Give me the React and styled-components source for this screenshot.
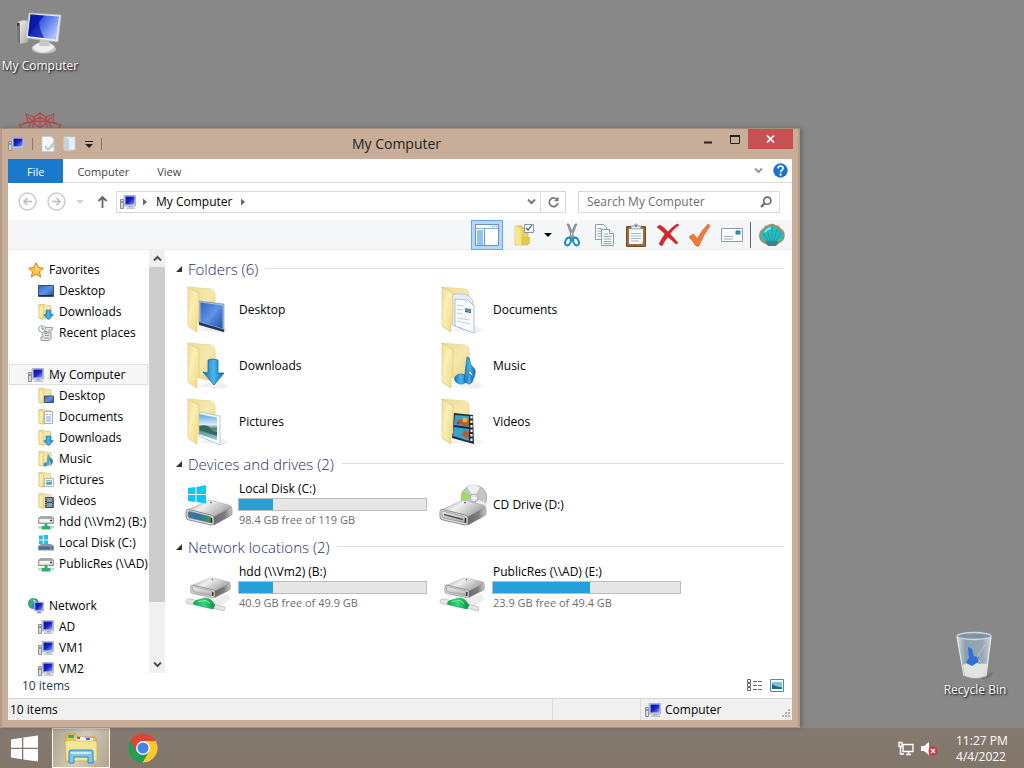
import styled, { createGlobalStyle } from "styled-components";

const colors = {
    desktop: "#888888",
    frame: "#c8ae98",
    frameEdge: "#a08d7e",
    blue: "#1979ca",
    bar: "#26a0da",
    line: "#dcdcdc",
    text: "#000000",
    grey: "#6d6d6d",
};

const GlobalStyle = createGlobalStyle`
* { box-sizing: border-box; }
body {
margin: 0;
font-family: "Open Sans", "Noto Sans", sans-serif;
font-size: 12px;
line-height: 16px;
color: ${colors.text};
}
button, input { font: inherit; color: inherit; }
svg { display: block; flex: none; }
`

const Screen = styled.div`
display: flex;
flex-direction: column;
height: 100vh;
overflow: hidden;
background: ${colors.desktop};
`
const Desktop = styled.main`
position: relative;
flex: 1;
min-height: 0;
`
const PlainButton = styled.button`
display: flex;
align-items: center;
justify-content: center;
padding: 0;
border: 0;
background: none;
`
const Shortcut = styled(PlainButton)`
position: absolute;
left: ${p => p.$left};
right: ${p => p.$right};
top: ${p => p.$top};
bottom: ${p => p.$bottom};
width: 80px;
flex-direction: column;
gap: 2px;
color: #fff;
text-shadow: 1px 1px 2px #000;
white-space: nowrap;
`

/* window */
const Window = styled.section`
position: absolute;
left: 0;
right: 224px;
top: 128px;
bottom: 0;
display: flex;
flex-direction: column;
padding: 0 8px 8px;
background: ${colors.frame};
border-top: 1px solid ${colors.frameEdge};
box-shadow: inset 2px 0 0 #b39b88, inset -2px 0 0 #b39b88, inset 0 -1px 0 #a58f7e, 2px 0 4px #666;
`
const TitleBar = styled.header`
display: grid;
grid-template-columns: 1fr auto 1fr;
height: 30px;
margin: 0 -1px 0 -8px;
`
const QuickAccess = styled.div`
display: flex;
align-items: center;
gap: 8px;
padding-left: 8px;
`
const Title = styled.h1`
margin: 0;
font-size: 14px;
line-height: 30px;
font-weight: 400;
color: #222;
`
const Controls = styled.div`
display: flex;
justify-content: flex-end;
`
const Control = styled(PlainButton)`
width: ${p => (p.$close ? 45 : 27)}px;
height: 20px;
background: ${p => (p.$close ? "#c75050" : "none")};
`
const Divider = styled.span`
width: 1px;
height: ${p => p.$height}px;
background: ${p => p.$color};
`
const Client = styled.div`
display: flex;
flex-direction: column;
flex: 1;
min-height: 0;
background: #fff;
`
const Ribbon = styled.div`
display: flex;
height: 24px;
flex: none;
border-bottom: 1px solid ${colors.line};
`
const Tab = styled(PlainButton)`
padding: 2px ${p => (p.$file ? 19 : 14)}px 0;
height: ${p => (p.$file ? 24 : 23)}px;
font-size: 11px;
background: ${p => (p.$file ? colors.blue : "none")};
color: ${p => (p.$file ? "#fff" : "#444")};
`
const RibbonEnd = styled.div`
display: flex;
align-items: center;
gap: 10px;
margin-left: auto;
padding-right: 4px;
`
const AddressRow = styled.div`
display: flex;
align-items: center;
height: 37px;
flex: none;
padding: 0 12px 0 10px;
`
const NavButtons = styled.div`
display: flex;
align-items: center;
gap: 10px;
padding-right: 6px;
`
const AddressBox = styled.div`
display: flex;
align-items: center;
flex: 1;
height: 22px;
border: 1px solid #d9d9d9;
`
const Crumb = styled(PlainButton)`
padding: 0 7px;
`
const RootCrumb = styled(Crumb)`
padding: 0 5px 0 3px;
`
const Refresh = styled(PlainButton)`
width: 25px;
height: 20px;
margin-left: 4px;
border-left: 1px solid #d9d9d9;
`
const SearchBox = styled.label`
display: flex;
align-items: center;
width: 202px;
height: 22px;
margin-left: 12px;
padding: 0 7px 0 8px;
border: 1px solid #d9d9d9;
`
const SearchInput = styled.input`
flex: 1;
min-width: 0;
padding: 0;
border: 0;
outline: 0;
background: none;
&::placeholder { color: #6d6d6d; opacity: 1; }
`
const CommandBar = styled.div`
display: flex;
justify-content: flex-end;
align-items: center;
height: 30px;
flex: none;
padding-right: 4px;
background: #f5f6f7;
border-bottom: 1px solid #eceded;
`
const Command = styled(PlainButton)`
width: ${p => (p.$narrow ? 16 : 32)}px;
height: 30px;
border: ${p => (p.$active ? "1px solid #66a7e8" : "0")};
background: ${p => (p.$active ? "#b9d5f5" : "none")};
margin-right: ${p => (p.$active ? 5 : 0)}px;
`
const CommandDivider = styled(Divider)`
margin: 0 5px 0 2px;
`
const Body = styled.div`
display: flex;
flex: 1;
min-height: 0;
`
const Sidebar = styled.nav`
flex: none;
width: 141px;
overflow: hidden;
padding-top: 9px;
`
const SideList = styled.ul`
margin: 0 0 21px;
padding: 0;
list-style: none;
`
const SideLink = styled.a`
display: flex;
align-items: center;
gap: 5px;
height: 21px;
margin: 0 1px;
padding-left: ${p => (p.$root ? 18 : 28)}px;
border: 1px solid ${p => (p.$selected ? "#dedede" : "transparent")};
background: ${p => (p.$selected ? "#f7f7f7" : "none")};
color: inherit;
text-decoration: none;
white-space: nowrap;
`
const ScrollTrack = styled.div`
display: flex;
flex-direction: column;
width: 16px;
margin-bottom: 4px;
background: #f0f0f0;
`
const ScrollButton = styled(PlainButton)`
height: 17px;
flex: none;
`
const ScrollThumb = styled.div`
height: 86%;
background: #cdcdcd;
`
const ScrollRest = styled.div`
flex: 1;
`
const Content = styled.div`
flex: 1;
min-width: 0;
padding: 5px 8px 0 10px;
overflow: hidden;
`
const GroupHeader = styled.h2`
display: flex;
align-items: center;
gap: 5px;
height: 27px;
margin: 0;
font-size: 15px;
font-weight: 300;
color: #1e2d6c;
&::after {
content: "";
flex: 1;
height: 1px;
margin-left: 2px;
background: #e2e2e2;
}
`
const Tiles = styled.div`
display: grid;
grid-template-columns: repeat(auto-fill, 254px);
padding-left: 10px;
`
const Tile = styled.a`
display: flex;
align-items: center;
gap: 5px;
height: 56px;
color: inherit;
text-decoration: none;
`
const TileText = styled.div`
width: 189px;
padding-bottom: ${p => (p.$drive ? 2 : 0)}px;
`
const TileLine = styled.div`
padding-left: 1px;
font-size: ${p => (p.$muted ? 11 : 12)}px;
color: ${p => (p.$muted ? colors.grey : colors.text)};
`
const Meter = styled.div`
height: 13px;
margin: 1px 0;
border: 1px solid #bcbcbc;
background: #e6e6e6;
`
const MeterFill = styled.div`
height: 100%;
background: ${colors.bar};
`
const DetailsRow = styled.div`
display: flex;
align-items: center;
gap: 8px;
height: 21px;
flex: none;
padding: 0 8px 4px 14px;
color: #1e395b;
`
const Grow = styled.span`
flex: 1;
`
const StatusBar = styled.footer`
display: grid;
grid-template-columns: 1fr 88px 152px;
height: 22px;
flex: none;
background: #f0f0f0;
border-top: 1px solid #d7d7d7;
`
const StatusCell = styled.div`
display: flex;
align-items: center;
gap: 4px;
padding-left: ${p => (p.$first ? 2 : 4)}px;
border-left: ${p => (p.$first ? "0" : "1px solid #dadada")};
`

/* taskbar */
const Taskbar = styled.footer`
display: flex;
align-items: center;
height: 40px;
flex: none;
background: linear-gradient(#857a70, #82766b);
color: #fff;
`
const StartButton = styled(PlainButton)`
width: 48px;
height: 40px;
`
const TaskButton = styled(PlainButton)`
width: 58px;
height: 40px;
margin-left: 4px;
border: ${p => (p.$active ? "1px solid #fff6e8" : "0")};
background: ${p => (p.$active ? "linear-gradient(110deg, #aba392, #d6ccb8 50%, #aea590)" : "none")};
`
const Tray = styled.div`
display: flex;
align-items: center;
gap: 7px;
margin-left: auto;
padding-right: 18px;
`
const Clock = styled.time`
width: 50px;
margin-left: 11px;
padding-top: 2px;
font-size: 12px;
text-align: center;
white-space: nowrap;
`

/* shared gradients, referenced by id from every icon */
const GradientSheet = styled.svg`
position: absolute;
`

function Gradients() {
    return (
        <GradientSheet width="0" height="0" aria-hidden="true">
            <defs>
                <linearGradient id="screen" x1="0" y1="0" x2="1" y2=".6">
                    <stop offset="0" stopColor="#0c1a9c" /><stop offset=".38" stopColor="#0a1fc4" />
                    <stop offset=".42" stopColor="#3c5ce4" /><stop offset="1" stopColor="#a8c2fb" />
                </linearGradient>
                <linearGradient id="smallScreen" x1="0" y1="0" x2="1" y2="1">
                    <stop offset="0" stopColor="#0b109a" /><stop offset=".5" stopColor="#1a22c8" /><stop offset="1" stopColor="#8fa2f4" />
                </linearGradient>
                <linearGradient id="silver" x1="0" y1="0" x2="1" y2="1">
                    <stop offset="0" stopColor="#f6f6f4" /><stop offset="1" stopColor="#a9a9a7" />
                </linearGradient>
                <linearGradient id="flap" x1="0" y1="0" x2="1" y2="1">
                    <stop offset="0" stopColor="#f0dd90" /><stop offset=".4" stopColor="#fbefb8" /><stop offset="1" stopColor="#f0d877" />
                </linearGradient>
                <linearGradient id="back" x1="0" y1="0" x2="1" y2="1">
                    <stop offset="0" stopColor="#eedb93" /><stop offset=".5" stopColor="#f6e8ae" /><stop offset="1" stopColor="#e2c979" />
                </linearGradient>
                <linearGradient id="arrow" x1="0" y1="0" x2="1" y2="0">
                    <stop offset="0" stopColor="#1779bd" /><stop offset=".5" stopColor="#48b6ec" /><stop offset="1" stopColor="#0d6cb2" />
                </linearGradient>
                <linearGradient id="deskBlue" x1="0" y1="0" x2="1" y2="1">
                    <stop offset="0" stopColor="#3767be" /><stop offset=".5" stopColor="#5d93ea" /><stop offset="1" stopColor="#2450a2" />
                </linearGradient>
                <linearGradient id="photo" x1="0" y1="0" x2="0" y2="1">
                    <stop offset="0" stopColor="#5aa5e3" /><stop offset=".4" stopColor="#d8edf5" />
                    <stop offset=".55" stopColor="#4d8179" /><stop offset="1" stopColor="#9cd0e8" />
                </linearGradient>
                <linearGradient id="driveTop" x1="0" y1="0" x2="1" y2=".5">
                    <stop offset="0" stopColor="#9a9a9a" /><stop offset=".45" stopColor="#efefef" /><stop offset="1" stopColor="#a4a4a4" />
                </linearGradient>
                <linearGradient id="driveSide" x1="0" y1="0" x2="1" y2="0">
                    <stop offset="0" stopColor="#6a6a6a" /><stop offset=".6" stopColor="#7c7c7c" /><stop offset="1" stopColor="#c9c9c9" />
                </linearGradient>
                <linearGradient id="cFront" x1="0" y1="0" x2="1" y2="0">
                    <stop offset="0" stopColor="#56718f" /><stop offset=".5" stopColor="#1d7ab5" /><stop offset="1" stopColor="#4b9a42" />
                </linearGradient>
                <linearGradient id="plainFront" x1="0" y1="0" x2="0" y2="1">
                    <stop offset="0" stopColor="#f2f2f2" /><stop offset="1" stopColor="#a8a8a8" />
                </linearGradient>
                <linearGradient id="cable" x1="0" y1="0" x2="1" y2="0">
                    <stop offset="0" stopColor="#12aa4f" /><stop offset=".5" stopColor="#2fd87b" /><stop offset="1" stopColor="#0c8f3d" />
                </linearGradient>
                <linearGradient id="bin" x1="0" y1="0" x2="1" y2="0">
                    <stop offset="0" stopColor="#e8f1f6" /><stop offset=".25" stopColor="#8fa8bb" />
                    <stop offset=".75" stopColor="#9db1bf" /><stop offset="1" stopColor="#e4ebef" />
                </linearGradient>
            </defs>
        </GradientSheet>
    )
}

function ComputerLarge() {
    return (
        <svg width="48" height="44" viewBox="0 0 48 44">
            <path d="M1 10 8 8l4 1v21l-8 2-3-2z" fill="url(#silver)" stroke="#a5a5a3" strokeWidth=".6" />
            <path d="M1 10l3 1v21l-3-2z" fill="#77776f" />
            <path d="M2 11v3" stroke="#222" strokeWidth="1.4" />
            <ellipse cx="28" cy="37" rx="12" ry="4.5" fill="#c4c4c2" />
            <path d="M16 35q5-5 12-5t11 5q-5 6-12 6t-11-6z" fill="#eeeeec" stroke="#aaa" strokeWidth=".5" />
            <path d="M24 27h9l1 7h-11z" fill="#c8c8c6" />
            <path d="M13 1 45 3 42 30 10 26z" fill="#e6e9ef" stroke="#b2b7c0" strokeWidth=".7" />
            <path d="M14.500 2.500 43 4.500 40 27.500 12 24z" fill="url(#screen)" />
            <path d="M14.500 2.500 23 3q-1 12 5 23L12 24z" fill="#0718a0" opacity=".7" />
        </svg>
    )
}

function ComputerSmall() {
    return (
        <svg width="16" height="16" viewBox="0 0 16 16">
            <path d="M.5 5.500h3v9h-3z" fill="#d9dcd8" stroke="#8b8f8c" />
            <path d="M2 7v2" stroke="#555" />
            <path d="M8.500 11h4v2.500h-4z" fill="#a5b0c4" />
            <path d="M6 13.500h9v1.300H6z" fill="#b4b9c3" />
            <path d="M4 1.500h11.500v10.500H4z" fill="#cfd6e6" stroke="#a2abc0" strokeWidth=".8" />
            <path d="M5.500 2.500h9v8h-9z" fill="url(#smallScreen)" />
        </svg>
    )
}

/* what leans out of a big folder, by kind */
const inserts = {
    desktop: (
        <g>
            <path d="M12 15 37 18v28L12 38z" fill="#a8bcd8" stroke="#7488a5" strokeWidth=".6" />
            <path d="M13.500 16.500 35.500 19.500v23L13.500 36z" fill="url(#deskBlue)" />
            <path d="M12 36 37 43.500V46L12 39z" fill="#243a50" />
        </g>
    ),
    downloads: <path d="M21 18q5-2 10 0v13h6L27 43 16 30l5 1z" fill="url(#arrow)" stroke="#0b5d9b" strokeWidth=".7" />,
    pictures: (
        <g>
            <path d="M12 14 33 18v29L12 38z" fill="#fbfdfe" stroke="#a3b3bc" strokeWidth=".7" />
            <path d="M12 16 30 19.500v23L12 36z" fill="url(#photo)" />
            <path d="M12 28q8-2 11 2t7 4v4L12 32z" fill="#36665f" />
        </g>
    ),
    documents: (
        <g>
            <path d="M11 9q10-3 17 1l4 5v31L11 39z" fill="#e9eef8" stroke="#a9b5cc" strokeWidth=".7" />
            <path d="M14 13 27 14l6 6v27L14 40z" fill="#f9fbff" stroke="#98a8c7" strokeWidth=".7" />
            <path d="M16 19 23 20M16 23 22 24M16 27 22 28M16 32 29 34M16 35 29 38" stroke="#c2cce0" />
            <path d="M24 22l6 1v3l-6-1z" fill="#5b8cc0" /><path d="M24 25l6 1v1l-6-1z" fill="#444" />
        </g>
    ),
    music: (
        <g fill="url(#arrow)" stroke="#1768a8" strokeWidth=".6">
            <ellipse cx="20" cy="37" rx="6.500" ry="5" /><ellipse cx="28" cy="37" rx="4" ry="5" />
            <path d="M26 15q3 0 3 4t4 7q3 5-1 11 0-7-4-9l-2 12h-3z" />
        </g>
    ),
    videos: (
        <g>
            <path d="M13 15 32 17 33 46 11 40z" fill="#242a2d" />
            <path d="M14 17 28 18v11L13 27zM13 29 28 31v12L12 38z" fill="#3aa2d2" />
            <path d="M16 25q1-6 5-3l4-3 3 3v7l-6-2zM20 37l4-5 4 2v7z" fill="#b5602c" />
            <circle cx="24" cy="22" r="2.500" fill="#e2b13b" /><circle cx="17" cy="25" r="1.500" fill="#a93556" />
            <path d="M30.500 18v27" stroke="#f3f3f3" strokeWidth="2.200" strokeDasharray="2.500 2" />
        </g>
    ),
}

function FolderLarge({ kind }) {
    return (
        <svg width="48" height="48" viewBox="-2 0 48 48">
            <path d="M10 44 36 47l6-3-12-6z" fill="#000" opacity=".06" />
            <path d="M1 1 25 3q2 1 3 4l1 33-17-4z" fill="url(#back)" stroke="#e3d195" strokeWidth=".6" />
            {inserts[kind]}
            <path d="M1 1 11 7q1 1 1 3v25l-2 1.500V46l-8-5q-1-1-1-2z" fill="url(#flap)" stroke="#d9c37a" strokeWidth=".6" />
        </svg>
    )
}

const smallInserts = {
    desktop: <path d="M6.500 8h9v6.500h-9z" fill="url(#deskBlue)" stroke="#44546c" />,
    downloads: <path d="M8 6h5v4.500h2.500L10.500 16 5.500 10.500H8z" fill="url(#arrow)" stroke="#1b6fae" strokeWidth=".5" />,
    documents: (
        <g>
            <path d="M6.500 2.500h8v12h-8z" fill="#f7faff" stroke="#8fa0b8" strokeWidth=".8" />
            <path d="M8 5.500h2M11 5.500h2M8 8h5M8 10h5M8 12h5" stroke="#7d9cc8" strokeWidth=".9" />
        </g>
    ),
    music: <path d="M10 3q1 4 4 5 2 3-1 6 0-4-2-5v4q-4 4-6 1 1-3 4-2z" fill="url(#arrow)" stroke="#2a7d9c" strokeWidth=".4" />,
    pictures: (
        <g>
            <path d="M6.500 6.500h9v8h-9z" fill="#fff" stroke="#9aa9b4" strokeWidth=".8" />
            <path d="M8 8h6v5H8z" fill="url(#photo)" />
        </g>
    ),
    videos: (
        <g>
            <path d="M7 4h9v11H7z" fill="#3b4248" /><path d="M9 5h5v4H9zM9 10h5v4H9z" fill="#7ea1b5" />
            <path d="M8 4.500V15M15 4.500V15" stroke="#ddd" strokeDasharray="1 1.200" />
        </g>
    ),
}

function FolderSmall({ kind }) {
    return (
        <svg width="16" height="16" viewBox="0 0 16 16">
            <path d="M1 .5h6l1 1h4q1 0 1 1v12H1z" fill="url(#back)" stroke="#d8c06a" strokeWidth=".6" />
            {smallInserts[kind]}
            <path d="M1 .5 5.500 3v12.500L1 14z" fill="url(#flap)" stroke="#d5bb5c" strokeWidth=".5" />
        </svg>
    )
}

function WindowsLogo({ size, fill }) {
    return (
        <svg width={size} height={size} viewBox="0 0 27 26">
            <path d="M0 4 11 2.300V12.300H0zM12.300 2.100 27 0v12.300H12.300zM0 13.500h11v10.200L0 22zM12.300 13.500H27V26l-14.700-2.100z" fill={fill} />
        </svg>
    )
}

function DriveBody({ front }) {
    return (
        <g>
            <path d="M28 23 46 14q1 1 1 3v4q0 1-2 2L29 32z" fill="url(#driveSide)" stroke="#7d7d7d" strokeWidth=".6" />
            <path d="M2 17 21 8.500q3-1.500 6-1l17 4.500q4 1 1 3L30 23q-2 1-4 .5z" fill="url(#driveTop)" stroke="#9b9b9b" strokeWidth=".4" />
            <path d="M1 18.500q0-2.500 3-2L26 22q3 .5 3 3v4.500q0 3-3 2.500L4 27q-3-.5-3-3z" fill="#dedede" stroke="#777" strokeWidth=".8" />
            <path d="M3 19.500q0-1.500 2-1L25 23.500q1.500.5 1.500 2v2.500q0 2-2 1.500L5 25q-2-.5-2-2z" fill={front} stroke="#777" strokeWidth=".6" />
            <path d="M26.500 25v5" stroke="#1b301b" strokeWidth="1.600" />
            <circle cx="26" cy="9.500" r="1" fill="#777" />
        </g>
    )
}

function DriveIcon({ kind }) {
    if (kind === "network") {
        return (
            <svg width="48" height="48" viewBox="0 0 48 48">
                <path d="M20 38 42 30l4 5-14 9z" fill="#000" opacity=".07" />
                <g transform="translate(5 8) scale(.86 .8)"><DriveBody front="url(#plainFront)" /></g>
                <path d="M1 37q1-3 4-2l9 2-1 4-10-1q-3-1-2-3zM28 40l12 3-1 4-12-3z" fill="#e2e7e3" stroke="#a8b0aa" strokeWidth=".6" />
                <path d="M11 36.500l9-2.500q4 0 6 2l4 5-2 4-9-2-10-2.500q-2-2 2-4z" fill="url(#cable)" stroke="#17854a" strokeWidth=".5" />
                <path d="M13 37.500l8-1 4 3" stroke="#7df0ac" fill="none" />
            </svg>
        )
    }
    return (
        <svg width="48" height="48" viewBox="0 0 48 48">
            {kind === "cd" && (
                <g>
                    <circle cx="35" cy="17" r="13" fill="#c3c5c4" stroke="#a3a3a3" strokeWidth=".7" />
                    <path d="M35 17 24 10q-3 5-1 9z" fill="#9bdc61" />
                    <path d="M35 17 28 6q7-4 13 0zM35 17l12 5q-2 5-7 7z" fill="#efefef" />
                    <circle cx="35" cy="17" r="4" fill="#e3e3e3" stroke="#9d9d9d" strokeWidth=".7" />
                    <circle cx="35" cy="17" r="1.500" fill="#fff" />
                </g>
            )}
            <g transform="translate(0 12)">
                <DriveBody front={kind === "system" ? "url(#cFront)" : "url(#plainFront)"} />
                {kind === "cd" && <path d="M5 21.500 24 26.500" stroke="#555" strokeWidth="1.600" />}
            </g>
            {kind === "system" && <path d="M3 7 10.500 6v7H3zM11.500 6 21 4v9h-9.500zM3 14h7.500v7L3 20zM11.500 14H21v8.500l-9.500-1.400z" fill="#12c5f0" />}
        </svg>
    )
}

function DriveSmall({ system }) {
    return (
        <svg width="16" height="16" viewBox="0 0 16 16">
            {system ? (
                <g>
                    <path d="M1 .5h3.800v4H1zM5.800 0H10v4.500H5.800zM1 5.500h3.800V9H1zM5.800 5.500H10V9H5.800z" fill="#21bfe8" />
                    <path d="M0 11 3 9h10l3 2v4.500H0z" fill="#8b9aa6" /><path d="M1 11.500h14v3H1z" fill="#3f6f94" /><path d="M12 13h2" stroke="#8de26f" />
                </g>
            ) : (
                <g>
                    <path d="M0 4 2.500 2h11L16 4v6H0z" fill="#a9a9a9" /><path d="M.8 4.300h14.400V9H.8z" fill="#f3f3f3" stroke="#888" strokeWidth=".7" />
                    <path d="M12 6.500h2" stroke="#333" strokeWidth="1.500" /><path d="M6.500 9.500h3v2.500h3v3.500h-9V12h3z" fill="#2fae72" />
                    <path d="M0 12h3.500v2.500H0zM12.500 12H16v2.500h-3.500z" fill="#b9dcc8" />
                </g>
            )}
        </svg>
    )
}

function StarIcon() {
    return (
        <svg width="16" height="16" viewBox="0 0 16 16">
            <path d="M8 .8 10.200 5.600 15.500 6.200 11.500 9.700 12.700 15 8 12.300 3.300 15 4.500 9.700.5 6.200 5.800 5.600z" fill="#fdc64a" stroke="#df7c1c" />
            <path d="M8 3.500 9.400 7 12 7.400 8 8z" fill="#fff1b6" />
        </svg>
    )
}

function DesktopSmall() {
    return (
        <svg width="16" height="16" viewBox="0 0 16 16">
            <path d="M.5 2.500h15v11H.5z" fill="url(#deskBlue)" stroke="#3d4d6a" /><path d="M1 12.500h14" stroke="#1d2d46" />
        </svg>
    )
}

function RecentIcon() {
    return (
        <svg width="16" height="16" viewBox="0 0 16 16">
            <path d="M4 2.500h10.500v2H13V14q-1 1.500-3 1.500H3V12h2z" fill="#e4e7e9" stroke="#8d9499" strokeWidth=".9" />
            <path d="M7 6.500h2v2H7zM10 6h2M10 8h2M7 10.500h4M6 13h5" stroke="#7f8a92" fill="none" strokeWidth=".9" />
            <circle cx="4" cy="4" r="3.400" fill="#f4f6f8" stroke="#9aa3a9" /><path d="M4 2v2h2" stroke="#7b868e" fill="none" />
        </svg>
    )
}

function NetworkIcon() {
    return (
        <svg width="16" height="16" viewBox="0 0 16 16">
            <circle cx="5.500" cy="5.500" r="5.500" fill="#2f86cc" /><path d="M2 2q4-3 6 0T5 5q-2 3 0 5Q0 9 1 5z" fill="#3fae63" /><path d="M5 1l3 2-2 1z" fill="#d9f0ff" />
            <path d="M6.500 4h9v9h-9z" fill="#cfd6e6" stroke="#98a3be" strokeWidth=".6" /><path d="M7.300 4.800h7.400v7.400H7.300z" fill="url(#smallScreen)" />
            <path d="M9.500 13h3l1 2.500h-5z" fill="#93a3c0" />
        </svg>
    )
}

function Chevron({ up, color = "#777" }) {
    return (
        <svg width="9" height="7" viewBox="0 0 9 7">
            <path d={up ? "M1 5.500 4.500 2 8 5.500" : "M1 1.500 4.500 5 8 1.500"} fill="none" stroke={color} strokeWidth="2" />
        </svg>
    )
}

function Caret({ right, color = "#666" }) {
    return (
        <svg width="8" height="8" viewBox="0 0 8 8">
            <path d={right ? "M2 0.500 6 4 2 7.500z" : "M0 2h8L4 6z"} fill={color} />
        </svg>
    )
}

function RoundArrow({ forward }) {
    return (
        <svg width="19" height="19" viewBox="0 0 19 19">
            <circle cx="9.500" cy="9.500" r="8.500" fill="#fff" stroke="#c9c9c9" strokeWidth="1.400" />
            <path d={forward ? "M5 9.500h8M9.500 6 13 9.500 9.500 13" : "M14 9.500H6M9.500 6 6 9.500 9.500 13"} fill="none" stroke="#bdbdbd" strokeWidth="1.600" />
        </svg>
    )
}

const commands = [
    {
        name: "Cut",
        icon: (
            <svg width="24" height="24" viewBox="0 0 24 24">
                <path d="M7 1 9 1 14.500 15 12.500 16zM17 1h-2L9 15l2 1z" fill="#8d9aa3" stroke="#6d7a83" strokeWidth=".5" />
                <ellipse cx="8" cy="18.500" rx="2.600" ry="4" transform="rotate(25 8 18.500)" fill="none" stroke="#1b8cc4" strokeWidth="2" />
                <ellipse cx="16" cy="18.500" rx="2.600" ry="4" transform="rotate(-25 16 18.500)" fill="none" stroke="#1b8cc4" strokeWidth="2" />
            </svg>
        ),
    },
    {
        name: "Copy",
        icon: (
            <svg width="24" height="24" viewBox="0 0 24 24" fill="#fff" stroke="#8d9ba5">
                <path d="M3.500 1.500h8l3 3v12h-11z" /><path d="M5 5.500h5M5 8h5M5 10.500h5M5 13h5" stroke="#8db3cf" />
                <path d="M9.500 6.500h8l4 4v12h-12z" /><path d="M17.500 6.500v4h4" /><path d="M11.500 11h5M11.500 13.500h8M11.500 16h8M11.500 18.500h8M11.500 20.500h8" stroke="#7faac9" />
            </svg>
        ),
    },
    {
        name: "Paste",
        icon: (
            <svg width="24" height="24" viewBox="0 0 24 24">
                <path d="M2.500 3.500h19v20h-19z" fill="#9b6b36" stroke="#74491e" /><path d="M5 6h14v15H5z" fill="#fbfdff" />
                <path d="M7 10.500h10M7 13h10M7 15.500h10M7 18h8" stroke="#9cb4c5" />
                <path d="M16 21l3-3v3z" fill="#c4d0d8" /><path d="M7 6V3h3q0-2 2-2t2 2h3v3z" fill="#e6e9eb" stroke="#7c8489" strokeWidth=".7" /><circle cx="12" cy="3" r="1" fill="#555" />
            </svg>
        ),
    },
    {
        name: "Delete",
        icon: (
            <svg width="24" height="24" viewBox="0 0 24 24">
                <path d="M1 4 4 2q5 3 8 7 4-5 9-8l2 1q-7 5-9 9 4 4 8 9l-2 1q-4-4-8-7-4 4-6 9l-3-2q3-6 6-10-4-4-8-7z" fill="#d8262b" stroke="#ab1419" strokeWidth=".5" />
            </svg>
        ),
    },
    {
        name: "Rename",
        icon: (
            <svg width="24" height="24" viewBox="0 0 24 24">
                <path d="M1 14 5 11q3 2 4 5Q14 7 20 1l2 2q-7 9-11 20H8Q5 18 1 14z" fill="#f07a3c" stroke="#cf551a" strokeWidth=".6" />
            </svg>
        ),
    },
    {
        name: "Properties",
        icon: (
            <svg width="24" height="24" viewBox="0 0 24 24">
                <path d="M1.500 5.500h21v13h-21z" fill="#fdfefe" stroke="#8d989f" /><path d="M4 13.500h9M4 16h9" stroke="#a0a9af" />
                <path d="M16 8h4v3h-4z" fill="#2b9cba" stroke="#1a7f9c" />
            </svg>
        ),
    },
]

function ShellIcon() {
    return (
        <svg width="26" height="24" viewBox="0 0 26 24">
            <path d="M4 19Q0 16 1 11q1-4 4-5 1-3 4-3 4-3 8 0 3 0 4 3 4 2 4 6 0 5-4 7l-3 2H8z" fill="#2bbcc2" stroke="#c3804f" strokeWidth="1.400" />
            <path d="M10 19 4 10M11.500 19 8 6M13 19V4M14.500 19 18 6M16 19l6-9" stroke="#1b9aa8" strokeWidth="1" />
            <path d="M6 9q3-4 6-4" stroke="#7fe8e2" strokeWidth="2" fill="none" /><path d="M7 18.500h12l-2 4H9z" fill="#2d8a80" stroke="#8a6a46" />
        </svg>
    )
}

function RecycleBin() {
    return (
        <svg width="42" height="50" viewBox="0 0 42 50">
            <path d="M26 48 39 42l-2 5-8 3z" fill="#555" opacity=".4" />
            <path d="M3 6h34l-5 41q-10 4-21 0z" fill="url(#bin)" opacity=".75" />
            <path d="M9 35q5-4 8-1 5-3 8 0 4-1 8 0l-2 12q-9 4-20 0z" fill="#e2e4e2" />
            <path d="M14 17l4 2 2 8-5 3zM19 26l6 1-1 5-6 4-6-3 2-4z" fill="#2f6fda" />
            <path d="M31 15 23 27l4 6" stroke="#dbe6ee" fill="none" opacity=".5" />
            <ellipse cx="20" cy="6" rx="17" ry="3.500" fill="#7c94a4" stroke="#cddae1" strokeWidth="1.300" />
            <path d="M3 7 10 46M37 7 32 46" stroke="#e5ecef" strokeWidth="1.200" />
        </svg>
    )
}

function GearIcon() {
    return (
        <svg width="46" height="46" viewBox="0 0 46 46" fill="none" stroke="#b8484a" strokeWidth="1.300">
            <path d="M9 2 17 5 23 1 29 5 37 2 36 10 44 13 38 20 43 27 35 31 34 39 23 43 12 39 10 31 3 27 8 20 2 13 11 10z" />
            <path d="M3 13q20-8 40 0M11 5l24 22M35 5 11 27M17 5l-2 20M29 5l2 20M23 1v30" /><circle cx="23" cy="17" r="11" />
        </svg>
    )
}

function ExplorerIcon() {
    return (
        <svg width="34" height="32" viewBox="0 0 34 32">
            <path d="M2 4q0-2 2-2h7l2 3h17q2 0 2 2v21H2z" fill="#e9c95a" stroke="#b58d2d" strokeWidth=".7" />
            <path d="M4 3h6v3H4z" fill="#4aaa53" /><path d="M12 5h8v4h-8z" fill="#fff" /><path d="M13 5h3v2h-3z" fill="#d43d35" /><path d="M20 6h9v4h-9z" fill="#f5faff" /><path d="M22 6h4v2h-4z" fill="#2e75c9" />
            <path d="M1 9q9-2 14 0h18v20H2z" fill="#f7e691" stroke="#cda945" strokeWidth=".7" />
            <path d="M5 20q0-2 2-2h20q2 0 2 2v11h-5v-6H10v6H5z" fill="#7fc5ee" stroke="#3186c4" /><path d="M7 20h20v2H7z" fill="#c6ecff" />
        </svg>
    )
}

function ChromeIcon() {
    return (
        <svg width="30" height="30" viewBox="0 0 30 30">
            <path d="M15 8h12.700A14.500 14.500 0 0 1 14.500 29.500L21 18z" fill="#fbc831" />
            <path d="M2.400 7.750A14.500 14.500 0 0 0 14.500 29.500L21 18.500 9 18.500z" fill="#239c54" />
            <path d="M2.400 7.750 9 19l6-11h12.600A14.500 14.500 0 0 0 2.400 7.750z" fill="#dd4436" />
            <circle cx="15" cy="15" r="7" fill="#f5f5f5" /><circle cx="15" cy="15" r="5.500" fill="#4285ee" />
        </svg>
    )
}

const sideGroups = [
    {
        name: "Favorites", icon: <StarIcon />,
        items: [
            { name: "Desktop", icon: <DesktopSmall /> },
            { name: "Downloads", icon: <FolderSmall kind="downloads" /> },
            { name: "Recent places", icon: <RecentIcon /> },
        ],
    },
    {
        name: "My Computer", icon: <ComputerSmall />, selected: true,
        items: [
            { name: "Desktop", icon: <FolderSmall kind="desktop" /> },
            { name: "Documents", icon: <FolderSmall kind="documents" /> },
            { name: "Downloads", icon: <FolderSmall kind="downloads" /> },
            { name: "Music", icon: <FolderSmall kind="music" /> },
            { name: "Pictures", icon: <FolderSmall kind="pictures" /> },
            { name: "Videos", icon: <FolderSmall kind="videos" /> },
            { name: "hdd (\\\\Vm2) (B:)", icon: <DriveSmall /> },
            { name: "Local Disk (C:)", icon: <DriveSmall system /> },
            { name: "PublicRes (\\\\AD)", icon: <DriveSmall /> },
        ],
    },
    {
        name: "Network", icon: <NetworkIcon />,
        items: [
            { name: "AD", icon: <ComputerSmall /> },
            { name: "VM1", icon: <ComputerSmall /> },
            { name: "VM2", icon: <ComputerSmall /> },
        ],
    },
]

const groups = [
    {
        name: "Folders (6)",
        tiles: ["Desktop", "Documents", "Downloads", "Music", "Pictures", "Videos"].map(name => ({
            name, icon: <FolderLarge kind={name.toLowerCase()} />,
        })),
    },
    {
        name: "Devices and drives (2)",
        tiles: [
            { name: "Local Disk (C:)", icon: <DriveIcon kind="system" />, used: 18, info: "98.4 GB free of 119 GB" },
            { name: "CD Drive (D:)", icon: <DriveIcon kind="cd" /> },
        ],
    },
    {
        name: "Network locations (2)",
        tiles: [
            { name: "hdd (\\\\Vm2) (B:)", icon: <DriveIcon kind="network" />, used: 18, info: "40.9 GB free of 49.9 GB" },
            { name: "PublicRes (\\\\AD) (E:)", icon: <DriveIcon kind="network" />, used: 52, info: "23.9 GB free of 49.4 GB" },
        ],
    },
]

function SideGroup({ group }) {
    return (
        <SideList>
            <li>
                <SideLink href="#" $root $selected={group.selected}>{group.icon}{group.name}</SideLink>
            </li>
            {group.items.map(item => (
                <li key={item.name}>
                    <SideLink href="#">{item.icon}{item.name}</SideLink>
                </li>
            ))}
        </SideList>
    )
}

function FileTile({ tile }) {
    return (
        <Tile href="#">
            {tile.icon}
            <TileText $drive={tile.info}>
                <TileLine>{tile.name}</TileLine>
                {tile.info && (
                    <>
                        <Meter><MeterFill style={{ width: `${tile.used}%` }} /></Meter>
                        <TileLine $muted>{tile.info}</TileLine>
                    </>
                )}
            </TileText>
        </Tile>
    )
}

function Explorer() {
    return (
        <Window>
            <TitleBar>
                <QuickAccess>
                    <ComputerSmall />
                    <Divider $height={12} $color="#8c7461" />
                    <PlainButton aria-label="Properties">
                        <svg width="14" height="16" viewBox="0 0 14 16">
                            <path d="M1 .5h9l3 3v12H1z" fill="#f4f9fb" stroke="#c6d0d5" strokeWidth=".8" /><path d="M4 9l3 3 6-7v5l-6 5-3-3z" fill="#b7cdd9" />
                        </svg>
                    </PlainButton>
                    <PlainButton aria-label="New folder">
                        <svg width="14" height="16" viewBox="0 0 14 16">
                            <path d="M1 1h11v13H1z" fill="#e8eef3" stroke="#cad5dd" strokeWidth=".8" /><path d="M1 1l5 2v12.500l-5-2z" fill="#c3d1df" />
                        </svg>
                    </PlainButton>
                    <PlainButton aria-label="Customize toolbar">
                        <svg width="8" height="8" viewBox="0 0 8 8"><path d="M0 1.500h8" stroke="#222" /><path d="M0 4h8L4 8z" fill="#222" /></svg>
                    </PlainButton>
                    <Divider $height={12} $color="#8c7461" />
                </QuickAccess>
                <Title>My Computer</Title>
                <Controls>
                    <Control aria-label="Minimize">
                        <svg width="10" height="10" viewBox="0 0 10 10"><path d="M1 8.500h8" stroke="#222" strokeWidth="2" /></svg>
                    </Control>
                    <Control aria-label="Maximize">
                        <svg width="10" height="9" viewBox="0 0 10 9"><path d="M.5 1h9v7.500h-9z" fill="none" stroke="#222" /><path d="M0 1h10" stroke="#222" strokeWidth="2" /></svg>
                    </Control>
                    <Control $close aria-label="Close">
                        <svg width="9" height="8" viewBox="0 0 9 8"><path d="M1 .5 8 7.500M8 .5 1 7.500" stroke="#fff" strokeWidth="1.700" /></svg>
                    </Control>
                </Controls>
            </TitleBar>
            <Client>
                <Ribbon>
                    <Tab $file>File</Tab>
                    <Tab>Computer</Tab>
                    <Tab>View</Tab>
                    <RibbonEnd>
                        <PlainButton aria-label="Expand ribbon"><Chevron color="#999" /></PlainButton>
                        <PlainButton aria-label="Help">
                            <svg width="15" height="15" viewBox="0 0 15 15">
                                <circle cx="7.500" cy="7.500" r="7.200" fill="#1874cd" />
                                <path d="M5 5.500q0-2.500 2.500-2.500T10 5.300q0 1.200-1.300 2Q7.600 8 7.600 9.400" fill="none" stroke="#fff" strokeWidth="1.700" /><circle cx="7.600" cy="11.700" r="1.100" fill="#fff" />
                            </svg>
                        </PlainButton>
                    </RibbonEnd>
                </Ribbon>
                <AddressRow>
                    <NavButtons>
                        <PlainButton aria-label="Back"><RoundArrow /></PlainButton>
                        <PlainButton aria-label="Forward"><RoundArrow forward /></PlainButton>
                        <PlainButton aria-label="Recent locations"><Caret color="#d4d4d4" /></PlainButton>
                        <PlainButton aria-label="Up">
                            <svg width="16" height="14" viewBox="0 0 16 14"><path d="M8.500 13V2.500M4.500 6 8.500 2l4 4" fill="none" stroke="#666" strokeWidth="1.800" /></svg>
                        </PlainButton>
                    </NavButtons>
                    <AddressBox>
                        <RootCrumb aria-label="Computer"><ComputerSmall /></RootCrumb>
                        <Caret right />
                        <Crumb>My Computer</Crumb>
                        <Caret right />
                        <Grow />
                        <PlainButton aria-label="Previous locations"><Chevron /></PlainButton>
                        <Refresh aria-label="Refresh">
                            <svg width="13" height="13" viewBox="0 0 13 13"><path d="M10.500 5.500A4.300 4.300 0 1 0 10.800 8" fill="none" stroke="#777" strokeWidth="1.700" /><path d="M11.500 1.500v4.800H7z" fill="#777" /></svg>
                        </Refresh>
                    </AddressBox>
                    <SearchBox>
                        <SearchInput type="text" placeholder="Search My Computer" aria-label="Search My Computer" />
                        <svg width="12" height="12" viewBox="0 0 12 12"><circle cx="7.300" cy="4.700" r="3.600" fill="none" stroke="#666" strokeWidth="1.600" /><path d="M4.700 7.300 1 11" stroke="#666" strokeWidth="2.200" /></svg>
                    </SearchBox>
                </AddressRow>
                <CommandBar>
                    <Command $active aria-label="Navigation pane">
                        <svg width="24" height="22" viewBox="0 0 24 22">
                            <path d="M.5.5h23v21H.5z" fill="#fff" stroke="#6891bd" /><path d="M1 4.500h22" stroke="#8fb0d2" /><path d="M2 6h6v15H2z" fill="#8fc3f1" /><path d="M9.500 5v16" stroke="#6891bd" />
                            <path d="M17 2.500h5" stroke="#6891bd" strokeDasharray="1 1" />
                        </svg>
                    </Command>
                    <Command aria-label="Folder options">
                        <svg width="24" height="24" viewBox="0 0 24 24">
                            <path d="M3 3h7l1 2h5v17H3z" fill="#e9d35f" stroke="#cdb75c" strokeWidth=".7" /><path d="M3 3l6 3v17.500L3 21z" fill="#f6e68b" />
                            <path d="M10 14h8v7h-8z" fill="#e0c94c" /><path d="M12.500 1.500h9v8h-9z" fill="#f6fbff" stroke="#8397a8" /><path d="M14 5l2 2 4-5" fill="none" stroke="#3a5a85" strokeWidth="1.200" />
                        </svg>
                    </Command>
                    <Command $narrow aria-label="More options"><Caret color="#000" /></Command>
                    {commands.map(command => (
                        <Command key={command.name} aria-label={command.name}>{command.icon}</Command>
                    ))}
                    <CommandDivider $height={26} $color="#666" />
                    <Command aria-label="Shell options"><ShellIcon /></Command>
                </CommandBar>
                <Body>
                    <Sidebar>
                        {sideGroups.map(group => <SideGroup key={group.name} group={group} />)}
                    </Sidebar>
                    <ScrollTrack>
                        <ScrollButton aria-label="Scroll up"><Chevron up color="#505050" /></ScrollButton>
                        <ScrollRest>
                            <ScrollThumb />
                        </ScrollRest>
                        <ScrollButton aria-label="Scroll down"><Chevron color="#505050" /></ScrollButton>
                    </ScrollTrack>
                    <Content>
                        {groups.map(group => (
                            <section key={group.name}>
                                <GroupHeader>
                                    <svg width="8" height="8" viewBox="0 0 8 8"><path d="M7 1v6H1z" fill="#333" /></svg>
                                    {group.name}
                                </GroupHeader>
                                <Tiles>
                                    {group.tiles.map(tile => <FileTile key={tile.name} tile={tile} />)}
                                </Tiles>
                            </section>
                        ))}
                    </Content>
                </Body>
                <DetailsRow>
                    10 items
                    <Grow />
                    <PlainButton aria-label="Details view">
                        <svg width="15" height="13" viewBox="0 0 15 13" fill="none" stroke="#666">
                            <path d="M.5.5h3v3h-3zM.5 4.500h3v3h-3zM.5 8.500h3v3h-3z" /><path d="M6 2.500h9M6 6.500h9M6 10.500h9" strokeDasharray="4 1" />
                        </svg>
                    </PlainButton>
                    <PlainButton aria-label="Large icons view">
                        <svg width="14" height="13" viewBox="0 0 14 13"><path d="M.5.5h13v12H.5z" fill="#fff" stroke="#3a90b8" /><path d="M2 3h10v7H2z" fill="#7dc4dd" /><path d="M2 5q5 4 10 3v2H2z" fill="#1f6a73" /></svg>
                    </PlainButton>
                </DetailsRow>
                <StatusBar>
                    <StatusCell $first>10 items</StatusCell>
                    <StatusCell />
                    <StatusCell>
                        <ComputerSmall />
                        Computer
                        <Grow />
                        <svg width="12" height="18" viewBox="0 0 12 18" fill="#b5b0ab">
                            <path d="M8 8h2v2H8zM5 11h2v2H5zM8 11h2v2H8zM2 14h2v2H2zM5 14h2v2H5zM8 14h2v2H8z" />
                        </svg>
                    </StatusCell>
                </StatusBar>
            </Client>
        </Window>
    )
}

export default function App() {
    return (
        <Screen>
            <GlobalStyle />
            <Gradients />
            <Desktop>
                <Shortcut $left="0" $top="12px">
                    <ComputerLarge />
                    My Computer
                </Shortcut>
                <Shortcut $left="0" $top="112px" aria-label="Settings">
                    <GearIcon />
                </Shortcut>
                <Shortcut $right="9px" $bottom="30px">
                    <RecycleBin />
                    Recycle Bin
                </Shortcut>
                <Explorer />
            </Desktop>
            <Taskbar>
                <StartButton aria-label="Start"><WindowsLogo size={27} fill="#fff" /></StartButton>
                <TaskButton $active aria-label="File Explorer"><ExplorerIcon /></TaskButton>
                <TaskButton aria-label="Google Chrome"><ChromeIcon /></TaskButton>
                <Tray>
                    <svg width="16" height="15" viewBox="0 0 16 15" fill="none" stroke="#fff" strokeWidth="1.400">
                        <path d="M5 3.500h10v7H5zM8 13.500h5M10.500 10.500v3" /><path d="M1 1.500h3v4H1zM2.500 5.500V13H6" />
                    </svg>
                    <svg width="17" height="15" viewBox="0 0 17 15">
                        <path d="M0 5h3l5-4v13L3 10H0z" fill="#fff" /><circle cx="12" cy="10" r="4.500" fill="#d5333e" /><path d="M10 8l4 4M14 8l-4 4" stroke="#fff" strokeWidth="1.400" />
                    </svg>
                    <Clock>11:27 PM<br />4/4/2022</Clock>
                </Tray>
            </Taskbar>
        </Screen>
    )
}
